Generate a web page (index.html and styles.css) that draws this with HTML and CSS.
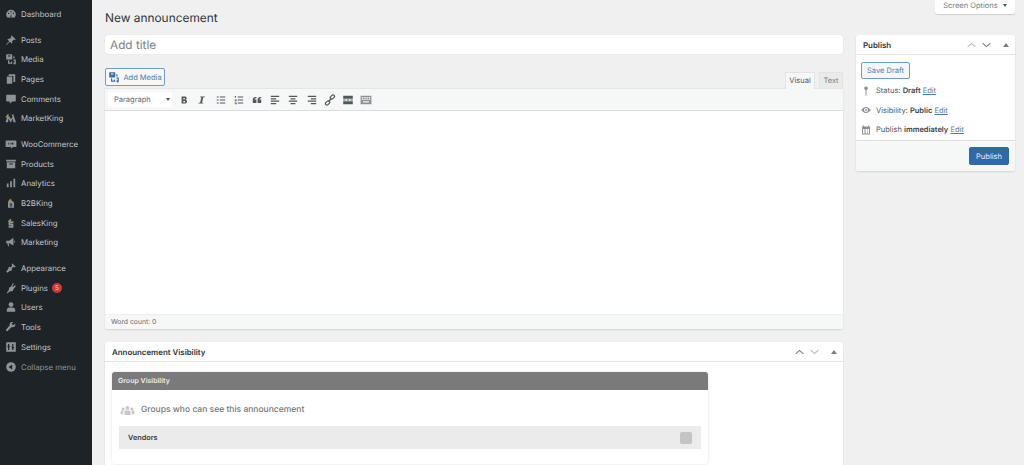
FILE: index.html
```html
<!DOCTYPE html>
<html lang="en">
<head>
<meta charset="UTF-8">
<title>New announcement</title>
<link rel="stylesheet" href="styles.css">
</head>
<body>
<div class="wrap">

<nav class="sidebar">
  <ul class="menu">
    <li><svg viewBox="0 0 20 20"><path d="M10 3a8 8 0 0 0-8 8c0 2 .7 3.700 1.900 5h12.200A8 8 0 0 0 18 11a8 8 0 0 0-8-8zM9 5h2v2H9zM5 8h2v2H5zm8 0h2v2h-2zM9 15l1-6 1 6z"/></svg>Dashboard</li>
  </ul>
  <ul class="menu">
    <li><svg viewBox="0 0 20 20"><path d="M11 2l7 7-2 1-1-1-3 3 0 3-1 1-3-3-5 5-1 0 0-1 5-5-3-3 1-1 3 0 3-3-1-1z"/></svg>Posts</li>
    <li><svg viewBox="0 0 20 20"><path d="M2 2h10v9H2zm3 2v2h4V4zM13 6h3v3h-2V7h-1zM5 12h2v4h3v-2h2v4H5zM14 11h4v6a2 2 0 1 1-2-2v-2h-2z"/></svg>Media</li>
    <li><svg viewBox="0 0 20 20"><path d="M6 2h11v13h-3V5H6zM3 6h9v12H3z"/></svg>Pages</li>
    <li><svg viewBox="0 0 20 20"><path d="M3 3h14a1 1 0 0 1 1 1v9a1 1 0 0 1-1 1h-5l-4 4v-4H3a1 1 0 0 1-1-1V4a1 1 0 0 1 1-1z"/></svg>Comments</li>
    <li><svg viewBox="0 0 20 20"><path class="gold" d="M1 8l4-5 1.500 2-4 5z"/><path d="M1 17l3-10h3l3 5 3-5h-1l-1-3h3l4 13h-4l-1-6-3 6H9l-3-6-1 6z"/></svg>MarketKing</li>
  </ul>
  <ul class="menu">
    <li><svg viewBox="0 0 20 20"><path d="M2 4h16a1 1 0 0 1 1 1v9a1 1 0 0 1-1 1h-5l-2 3-1-3H2a1 1 0 0 1-1-1V5a1 1 0 0 1 1-1zm3 4v3h1V8zm3 0v3h1V8zm3 0v3h3V8z"/></svg>WooCommerce</li>
    <li><svg viewBox="0 0 20 20"><path d="M2 3h16v3H2zM3 7h14v10H3zm4 2v2h6V9z"/></svg>Products</li>
    <li><svg viewBox="0 0 20 20"><path d="M3 11h3v6H3zM8.500 7h3v10h-3zM14 3h3v14h-3z"/></svg>Analytics</li>
    <li><svg viewBox="0 0 20 20"><path class="gold" d="M5 7l4-4 2 2-4 4z"/><path d="M5 9l5-4 5 4v9H5zm3 2v2h4v-2zm0 3v2h4v-2z"/></svg>B2BKing</li>
    <li><svg viewBox="0 0 20 20"><path class="gold" d="M5 7l4-4 2 2-4 4z"/><path d="M6 7h8v3H9v1h5v7H6v-3h5v-1H6z"/></svg>SalesKing</li>
    <li><svg viewBox="0 0 20 20"><path d="M2 8h5l7-5v13l-7-4H6l1 5H5l-1-5H2zM15 7a3 3 0 0 1 0 5z"/></svg>Marketing</li>
  </ul>
  <ul class="menu">
    <li><svg viewBox="0 0 20 20"><path d="M12 2l6 6-3 1-1-1-3 3 1 2-2 2-5-5 2-2 2 1 3-3-1-1zM6 11l3 3-5 4-2-2z"/></svg>Appearance</li>
    <li><svg viewBox="0 0 20 20"><path d="M13 2l2 1-3 4 2 1 3-3 1 2-4 5-1 3-5 1-4 3-1-1 3-4 1-5 3-1z"/></svg>Plugins <span class="badge">5</span></li>
    <li><svg viewBox="0 0 20 20"><circle cx="10" cy="6" r="4"/><path d="M3 18v-3c0-2 2-4 4-4h6c2 0 4 2 4 4v3z"/></svg>Users</li>
    <li><svg viewBox="0 0 20 20"><path d="M17 4l-3 3-2-1-1-2 3-2c-2-1-5 0-6 2-.5 1-.5 2 0 3l-6 7c-1 1 0 3 2 3l7-7c2 1 4 0 5-1 1-1 1.500-3 1-5z"/></svg>Tools</li>
    <li><svg viewBox="0 0 20 20"><path fill-rule="evenodd" d="M2 2h16v16H2zM5 5v3H4v2h1v5h2v-5h1V8H7V5zm7 0v5h-1v2h1v3h2v-3h1v-2h-1V5z"/></svg>Settings</li>
    <li class="collapse"><svg viewBox="0 0 20 20"><path fill-rule="evenodd" d="M10 2a8 8 0 1 1 0 16 8 8 0 0 1 0-16zm2 4l-6 4 6 4z"/></svg>Collapse menu</li>
  </ul>
</nav>

<main class="content">
  <div class="screen-options-row">
    <div class="screen-options">Screen Options <span class="caret"></span></div>
  </div>

  <h1>New announcement</h1>

  <div class="columns">
    <div class="main-col">
      <div class="title-input">Add title</div>

      <div class="editor-tools">
        <button class="btn-outline add-media"><svg class="media-icon" viewBox="0 0 20 20"><path d="M2 2h10v9H2zm3 2v2h4V4zM13 6h3v3h-2V7h-1zM5 12h2v4h3v-2h2v4H5zM14 11h4v6a2 2 0 1 1-2-2v-2h-2z"/></svg>Add Media</button>
        <div class="tabs">
          <span class="tab active">Visual</span>
          <span class="tab">Text</span>
        </div>
      </div>

      <div class="editor">
        <div class="toolbar">
          <div class="format-select">Paragraph <span class="caret"></span></div>
          <svg viewBox="0 0 20 20"><path d="M6 4h5c2 0 3.500 1 3.500 3 0 1-.6 2-1.500 2.500 1.200.4 2 1.500 2 2.800 0 2.200-1.700 3.700-4 3.700H6zm3 2.500V9h1.500c.7 0 1-.5 1-1.200s-.4-1.300-1-1.300zm0 5V14h2c.7 0 1-.6 1-1.300s-.4-1.200-1-1.200z"/></svg>
          <svg viewBox="0 0 20 20"><path d="M7 4h8l-.4 1.500h-2.400L10 14.500h2.300L12 16H4l.4-1.500h2.400L9 5.500H6.600z"/></svg>
          <svg viewBox="0 0 20 20"><path d="M3 4h3v2H3zm5 0h9v2H8zM3 9h3v2H3zm5 0h9v2H8zM3 14h3v2H3zm5 0h9v2H8z"/></svg>
          <svg viewBox="0 0 20 20"><path d="M3 3.500h2v3H4V5H3zM3 9h3v3H3v-1h2v-.5H3zM3 14h3v3H3v-1h2v-.3H3v-.4h2V15H3zM8 4h9v2H8zM8 9h9v2H8zM8 14h9v2H8z"/></svg>
          <svg viewBox="0 0 20 20"><path d="M9 5v2c-2 0-3 1-3 2h3v6H3V9c0-3 3-4 6-4zm8 0v2c-2 0-3 1-3 2h3v6h-6V9c0-3 3-4 6-4z"/></svg>
          <svg viewBox="0 0 20 20"><path d="M3 3h14v2H3zM3 7h9v2H3zM3 11h14v2H3zM3 15h9v2H3z"/></svg>
          <svg viewBox="0 0 20 20"><path d="M3 3h14v2H3zM6 7h8v2H6zM3 11h14v2H3zM6 15h8v2H6z"/></svg>
          <svg viewBox="0 0 20 20"><path d="M3 3h14v2H3zM8 7h9v2H8zM3 11h14v2H3zM8 15h9v2H8z"/></svg>
          <svg viewBox="0 0 20 20"><g fill="none" stroke="currentColor" stroke-width="2"><rect x="10" y="2.500" width="8" height="5" rx="2.500" transform="rotate(-45 14 5)"/><rect x="2" y="12.500" width="8" height="5" rx="2.500" transform="rotate(-45 6 15)"/><path d="M7.500 12.500l5-5"/></g></svg>
          <svg viewBox="0 0 20 20"><path d="M2 3h16v5H2zM2 12h16v5H2zM2 9.300h4v1.400H2zm6 0h4v1.400H8zm6 0h4v1.400h-4z"/></svg>
          <svg class="kitchen" viewBox="0 0 20 20"><path fill-rule="evenodd" d="M1 3h18v14H1zm2 2v2h2V5zm3 0v2h2V5zm3 0v2h2V5zm3 0v2h2V5zm3 0v2h2V5zM3 8v2h2V8zm3 0v2h2V8zm3 0v2h2V8zm3 0v2h2V8zm3 0v2h2V8zM5 12v2h10v-2z"/></svg>
        </div>
        <div class="editor-area"></div>
        <div class="status-bar">Word count: 0</div>
      </div>

      <section class="box visibility-box">
        <div class="box-head">
          <h2>Announcement Visibility</h2>
          <div class="box-controls">
            <svg class="chev" viewBox="0 0 14 8"><path d="M1 7l6-5.500L13 7"/></svg>
            <svg class="chev faint" viewBox="0 0 14 8"><path d="M1 1l6 5.500L13 1"/></svg>
            <span class="up-tri"></span>
          </div>
        </div>
        <div class="box-body">
          <div class="group-card">
            <div class="group-head">Group Visibility</div>
            <div class="group-body">
              <div class="group-title">
                <svg viewBox="0 0 24 16"><circle cx="12" cy="4" r="3.200"/><circle cx="5" cy="5.500" r="2.500"/><circle cx="19" cy="5.500" r="2.500"/><path d="M7 15v-4c0-2 1.500-3 3-3h4c1.500 0 3 1 3 3v4zM1 14v-3c0-2 1-3 3-3h2c-.6.800-1 1.800-1 3v3zM23 14v-3c0-2-1-3-3-3h-2c.6.800 1 1.800 1 3v3z"/></svg>
                Groups who can see this announcement
              </div>
              <div class="group-row">
                <span>Vendors</span>
                <span class="check"></span>
              </div>
            </div>
          </div>
        </div>
      </section>
    </div>

    <aside class="side-col">
      <section class="box publish-box">
        <div class="box-head">
          <h2>Publish</h2>
          <div class="box-controls">
            <svg class="chev faint" viewBox="0 0 14 8"><path d="M1 7l6-5.500L13 7"/></svg>
            <svg class="chev" viewBox="0 0 14 8"><path d="M1 1l6 5.500L13 1"/></svg>
            <span class="up-tri"></span>
          </div>
        </div>
        <div class="publish-body">
          <button class="btn-outline save-draft">Save Draft</button>
          <div class="pub-row">
            <svg viewBox="0 0 20 20"><path d="M10 1a3.500 3.500 0 0 1 1 6.900V19H9V7.900A3.500 3.500 0 0 1 10 1z"/></svg>
            <span>Status: <b>Draft</b> <a>Edit</a></span>
          </div>
          <div class="pub-row">
            <svg viewBox="0 0 20 20"><path fill-rule="evenodd" d="M10 4c4 0 7.500 3 9.500 6-2 3-5.500 6-9.500 6s-7.500-3-9.500-6c2-3 5.500-6 9.500-6zm0 2a4 4 0 1 0 0 8 4 4 0 0 0 0-8zm0 2a2 2 0 1 1-2 2l2-2z"/></svg>
            <span>Visibility: <b>Public</b> <a>Edit</a></span>
          </div>
          <div class="pub-row">
            <svg viewBox="0 0 20 20"><path fill-rule="evenodd" d="M2 3h2V1h2v2h8V1h2v2h2v16H2zm2 5v9h2V8zm3 0v9h2V8zm3 0v9h2V8zm3 0v9h3V8z"/></svg>
            <span>Publish <b>immediately</b> <a>Edit</a></span>
          </div>
        </div>
        <div class="publish-foot">
          <button class="btn-primary">Publish</button>
        </div>
      </section>
    </aside>
  </div>
</main>

</div>
</body>
</html>
```

FILE: styles.css
```css
html, body {
  margin: 0;
  padding: 0;
  height: 465px;
  overflow: hidden;
}
body {
  font-family: 'Inter', 'Liberation Sans', sans-serif;
  font-size: 7.5px;
  color: #50575e;
  background-color: #f0f0f1;
  text-rendering: geometricPrecision;
}
.wrap {
  display: flex;
  height: 465px;
  overflow: hidden;
}

/* admin menu */
.sidebar {
  width: 92px;
  flex-shrink: 0;
  background-color: #1d2327;
  padding-top: 4px;
  box-sizing: border-box;
}
.menu {
  list-style: none;
  margin: 0 0 6px 0;
  padding: 0;
}
.menu li {
  display: flex;
  align-items: center;
  height: 19.7px;
  padding-left: 5px;
  color: #c3c5c7;
  font-size: 7.8px;
}
.menu svg {
  width: 12px;
  height: 12px;
  margin-right: 4px;
  fill: #8f9397;
  flex-shrink: 0;
}
.menu .gold {
  fill: #b8962e;
}
.menu .collapse {
  color: #8f9397;
}
.badge {
  display: inline-block;
  width: 10px;
  height: 10px;
  margin-left: 4px;
  border-radius: 50%;
  background-color: #d63638;
  color: #f3d0d0;
  font-size: 6.500px;
  line-height: 10px;
  text-align: center;
}

/* page */
.content {
  flex: 1;
  padding: 0 9px 0 13px;
  min-width: 0;
}
.screen-options-row {
  display: flex;
  justify-content: flex-end;
  height: 0;
}
.screen-options {
  width: 80px;
  height: 14px;
  box-sizing: border-box;
  background-color: #fff;
  border-radius: 0 0 3px 3px;
  box-shadow: 0 1px 1px rgba(0, 0, 0, 0.15);
  color: #787c82;
  line-height: 12px;
  text-align: center;
}
.caret {
  display: inline-block;
  margin-left: 3px;
  border-left: 2.500px solid transparent;
  border-right: 2.500px solid transparent;
  border-top: 3px solid #50575e;
  vertical-align: middle;
}
h1 {
  margin: 0;
  padding-top: 9px;
  height: 35px;
  box-sizing: border-box;
  font-size: 11.900px;
  font-weight: 400;
  line-height: 17px;
  color: #2c3338;
}
.columns {
  display: flex;
  gap: 13px;
}
.main-col {
  width: 738px;
}
.side-col {
  width: 159px;
}
.title-input {
  height: 19px;
  background-color: #fff;
  border-radius: 3px;
  box-shadow: 0 0 1px rgba(0, 0, 0, 0.2);
  padding-left: 5px;
  font-size: 11.800px;
  line-height: 20px;
  color: #7d8185;
}
.editor-tools {
  display: flex;
  justify-content: space-between;
  align-items: flex-end;
  height: 34px;
}
button {
  font-family: inherit;
  font-size: 7.5px;
  text-rendering: geometricPrecision;
  border-radius: 2px;
  padding: 0;
}
.btn-outline {
  border: 1px solid #6f9bc8;
  background-color: #f6f7f7;
  color: #4a7fb5;
}
.add-media {
  display: flex;
  align-items: center;
  justify-content: center;
  width: 60px;
  height: 18px;
  margin-bottom: 2px;
}
.media-icon {
  width: 12px;
  height: 12px;
  margin-right: 3px;
  fill: #3a73ac;
}
.tabs {
  display: flex;
  gap: 4px;
}
.tab {
  height: 16px;
  box-sizing: border-box;
  line-height: 16px;
  text-align: center;
  background-color: #ebebec;
  border: 1px solid #e2e3e4;
  border-bottom: none;
  color: #787c82;
  width: 24px;
  margin-bottom: -1px;
  position: relative;
}
.tab.active {
  width: 30px;
  background-color: #f6f7f7;
  color: #50575e;
  height: 17px;
}
.editor {
  background-color: #fff;
  border-radius: 0 0 3px 3px;
  box-shadow: 0 1px 2px rgba(0, 0, 0, 0.12);
}
.toolbar {
  display: flex;
  align-items: center;
  gap: 6.200px;
  height: 23px;
  box-sizing: border-box;
  padding-left: 3px;
  background-color: #f6f7f7;
  border-top: 1px solid #e4e5e6;
  border-bottom: 1px solid #dcdcde;
  color: #50575e;
}
.toolbar svg {
  width: 12px;
  height: 12px;
  fill: #50575e;
  flex-shrink: 0;
}
.toolbar .kitchen {
  fill: #8c8f94;
}
.format-select {
  display: flex;
  align-items: center;
  justify-content: space-between;
  width: 64px;
  height: 15px;
  box-sizing: border-box;
  padding: 0 2px 0 6px;
  background-color: #fff;
  border-radius: 2px;
  color: #646970;
}
.editor-area {
  height: 203px;
}
.status-bar {
  height: 15px;
  padding-left: 6px;
  background-color: #f6f7f7;
  border-top: 1px solid #eef0f0;
  box-sizing: border-box;
  border-radius: 0 0 3px 3px;
  line-height: 14px;
  font-size: 6.800px;
  color: #646970;
}

/* boxes */
.box {
  background-color: #fff;
  border-radius: 3px;
  box-shadow: 0 1px 2px rgba(0, 0, 0, 0.12);
}
.visibility-box {
  margin-top: 13px;
  height: 140px;
}
.box-head {
  display: flex;
  justify-content: space-between;
  align-items: center;
  height: 20px;
  box-sizing: border-box;
  padding: 0 6px 0 7px;
  border-bottom: 1px solid #e2e3e4;
}
.box-head h2 {
  margin: 0;
  font-size: 7.900px;
  font-weight: 600;
  color: #2c3338;
}
.box-controls {
  display: flex;
  align-items: center;
  gap: 6px;
}
.chev {
  width: 9px;
  height: 6px;
  fill: none;
  stroke: #787c82;
  stroke-width: 1.600;
}
.chev.faint {
  stroke: #b4b7ba;
}
.up-tri {
  margin-left: 6px;
  border-left: 3px solid transparent;
  border-right: 3px solid transparent;
  border-bottom: 4px solid #787c82;
}
.box-body {
  padding: 10px 7px 0;
}
.group-card {
  width: 596px;
  border-radius: 3px;
  box-shadow: 0 0 3px rgba(0, 0, 0, 0.12);
}
.group-head {
  height: 18px;
  padding-left: 6px;
  box-sizing: border-box;
  background-color: #7a7a7a;
  border-radius: 3px 3px 0 0;
  color: #ececec;
  font-size: 7px;
  font-weight: 600;
  line-height: 18px;
}
.group-body {
  padding: 10px 7px 15px;
  height: 49px;
}
.group-title {
  display: flex;
  align-items: center;
  gap: 6px;
  height: 20px;
  margin-bottom: 6px;
  padding-left: 1px;
  font-size: 8.500px;
  font-weight: 500;
  color: #757575;
}
.group-title svg {
  width: 15px;
  height: 11px;
  fill: #c8c8c8;
}
.group-row {
  display: flex;
  justify-content: space-between;
  align-items: center;
  height: 23px;
  padding: 0 9px;
  background-color: #ebebeb;
  font-size: 7.300px;
  font-weight: 600;
  color: #3a3a3a;
}
.check {
  width: 12px;
  height: 12px;
  border-radius: 2px;
  background-color: #c4c4c4;
}

/* publish */
.publish-body {
  padding: 7px 6px 0 5px;
  height: 85px;
  box-sizing: border-box;
}
.save-draft {
  display: block;
  width: 49px;
  height: 17px;
}
.pub-row {
  display: flex;
  align-items: center;
  gap: 5px;
  height: 19.600px;
  font-size: 7.500px;
}
.save-draft + .pub-row {
  margin-top: 2px;
}
.pub-row svg {
  width: 10px;
  height: 10px;
  fill: #8c8f94;
  flex-shrink: 0;
}
.pub-row b {
  font-weight: 600;
  color: #3c434a;
}
.pub-row a {
  color: #4a7fb5;
  text-decoration: underline;
}
.publish-foot {
  display: flex;
  justify-content: flex-end;
  align-items: center;
  height: 31px;
  box-sizing: border-box;
  padding-right: 6px;
  background-color: #f6f7f7;
  border-top: 1px solid #dcdcde;
  border-radius: 0 0 3px 3px;
}
.btn-primary {
  width: 40px;
  height: 18px;
  border: 1px solid #2f6aa6;
  background-color: #2f6aa6;
  color: #e8eef5;
}
```
